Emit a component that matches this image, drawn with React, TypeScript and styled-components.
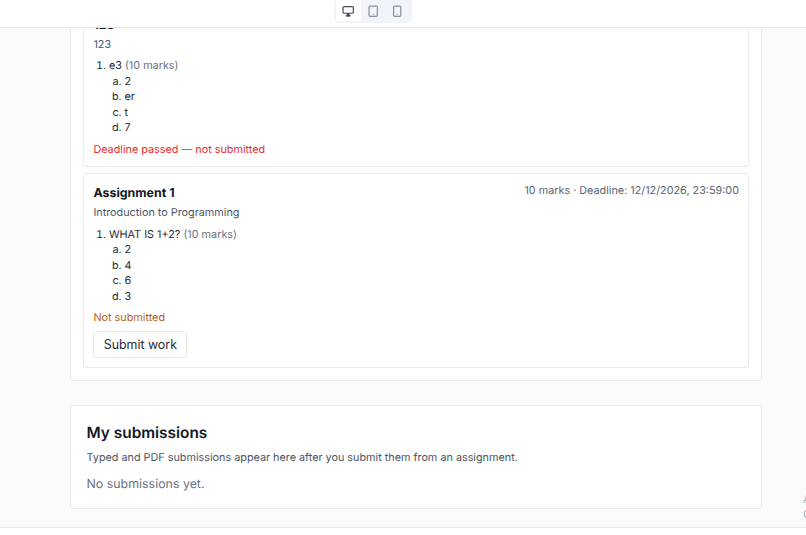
import React, {useState} from "react";
import styled, {createGlobalStyle} from "styled-components";
import {Smartphone, Tablet} from "lucide-react";

const assignments = [
    {
        id: 1,
        title: "123",
        course: "123",
        meta: "10 marks · Deadline: 12/12/2025, 23:59:00",
        question: "e3",
        options: ["2", "er", "t", "7"],
        open: false,
    },
    {
        id: 2,
        title: "Assignment 1",
        course: "Introduction to Programming",
        meta: "10 marks · Deadline: 12/12/2026, 23:59:00",
        question: "WHAT IS 1+2?",
        options: ["2", "4", "6", "3"],
        open: true,
    },
]

type IconProps = { size: number; strokeWidth: number }

// monitor with a solid stand
const Desktop = ({size, strokeWidth}: IconProps) => (
    <svg width={size} height={size} viewBox="0 0 24 24" fill="none" stroke="currentColor"
         strokeWidth={strokeWidth} strokeLinecap="round" strokeLinejoin="round">
        <rect x="2" y="3" width="20" height="13" rx="2"/>
        <path d="M10.5 17h3l.5 4h-4z" fill="currentColor"/>
        <path d="M8 21h8"/>
    </svg>
)

const devices = [
    {id: "desktop", Icon: Desktop},
    {id: "tablet", Icon: Tablet},
    {id: "mobile", Icon: Smartphone},
]

function App() {

    const [device, setDevice] = useState("desktop")

    return (
        <AppStyled>
            <GlobalStyle/>
            <Toolbar>
                <DeviceSwitch>
                    {devices.map(({id, Icon}) => (
                        <DeviceButton key={id} $active={device === id} aria-label={id}
                                      onClick={() => setDevice(id)}>
                            <Icon size={12.4} strokeWidth={2.3}/>
                        </DeviceButton>
                    ))}
                </DeviceSwitch>
            </Toolbar>
            <Preview>
                <Panel>
                    <AssignmentList>
                        {assignments.map(a => (
                            <AssignmentCard key={a.id}>
                                <CardHeader>
                                    <CardTitle>{a.title}</CardTitle>
                                    <Meta>{a.meta}</Meta>
                                </CardHeader>
                                <Course>{a.course}</Course>
                                <Questions>
                                    <li>
                                        {a.question} <Marks>(10 marks)</Marks>
                                        <Options>
                                            {a.options.map(o => <li key={o}>{o}</li>)}
                                        </Options>
                                    </li>
                                </Questions>
                                <Status $open={a.open}>
                                    {a.open ? "Not submitted" : "Deadline passed — not submitted"}
                                </Status>
                                {a.open && <SubmitButton>Submit work</SubmitButton>}
                            </AssignmentCard>
                        ))}
                    </AssignmentList>
                </Panel>
                <Submissions>
                    <SectionTitle>My submissions</SectionTitle>
                    <Hint>Typed and PDF submissions appear here after you submit them from an assignment.</Hint>
                    <Empty>No submissions yet.</Empty>
                </Submissions>
                <Watermark>
                    <div>Activate Windows</div>
                    <div>Go to Settings to activate Windows.</div>
                </Watermark>
            </Preview>
        </AppStyled>
    );
}

const GlobalStyle = createGlobalStyle`
  * {
    box-sizing: border-box;
  }

  body {
    margin: 0;
    background: #fff;
    font-family: Inter, sans-serif;
    color: #1f2937;
    overflow: hidden;
    text-rendering: geometricPrecision;
  }
`

const AppStyled = styled.div`
  display: flex;
  flex-direction: column;
  height: 535px;
  padding-bottom: 7px;
  overflow: hidden;
`

const Toolbar = styled.div`
  flex: none;
  display: flex;
  justify-content: center;
  align-items: flex-end;
  height: 28px;
  padding-bottom: 4px;
  padding-right: 60px;
  border-bottom: 1px solid #e2e8f0;
`

const DeviceSwitch = styled.div`
  display: flex;
  padding: 1px 2px 2px;
  background: #f1f5f9;
  border-radius: 5px;
`

const DeviceButton = styled.button<{ $active: boolean }>`
  display: flex;
  align-items: center;
  justify-content: center;
  width: 24.5px;
  height: 22px;
  padding: 2px 0 0;
  border: none;
  border-radius: 4px;
  cursor: pointer;
  background: ${p => p.$active ? "#fff" : "transparent"};
  color: ${p => p.$active ? "#3f4a5a" : "#7f90a6"};
`

const Preview = styled.div`
  position: relative;
  flex: 1;
  display: flex;
  flex-direction: column;
  justify-content: flex-end;
  gap: 24px;
  padding: 0 44px 18px 70px;
  min-height: 0;
  overflow: hidden;
  background: #f8fafc;
  border-bottom: 1px solid #e2e8f0;
`

const Panel = styled.section`
  flex: none;
  width: 692px;
  padding: 12px;
  background: #fff;
  border: 1px solid #e8ebef;
  border-radius: 3px;
`

const Submissions = styled(Panel)`
  height: 104px;
  padding: 16.5px 15.5px 0;
`

const AssignmentList = styled.div`
  display: flex;
  flex-direction: column;
  gap: 6px;
`

const AssignmentCard = styled.article`
  padding: 9.1px 9px 8px 9.4px;
  border: 1px solid #e8ebef;
  border-radius: 3px;
  font-size: 10.82px;
  line-height: 15.5px;
`

const CardHeader = styled.div`
  display: flex;
  justify-content: space-between;
  align-items: flex-start;
`

const CardTitle = styled.h3`
  margin: 0;
  font-size: 12.4px;
  font-weight: 650;
  line-height: 20px;
  color: #111827;
`

const Meta = styled.span`
  color: #5b6470;
`

const Course = styled.p`
  margin: 2.3px 0 5.9px;
  color: #4b5563;
`

const Questions = styled.ol`
  margin: 0;
  padding-left: 15.5px;
`

const Options = styled.ol`
  margin: 0;
  padding-left: 15.5px;
  list-style-type: lower-alpha;
`

const Marks = styled.span`
  color: #6b7280;
`

const Status = styled.p<{ $open: boolean }>`
  margin: 5.8px 0 0.6px;
  color: ${p => p.$open ? "#b45f14" : "#e02f2f"};
`

const SubmitButton = styled.button`
  display: block;
  height: 27px;
  margin: 5.6px 0 1px;
  padding: 0 9.3px;
  border: 1px solid #e5e7eb;
  border-radius: 3px;
  background: #fff;
  color: #1f2937;
  font: 12.4px Inter, sans-serif;
  cursor: pointer;
`

const SectionTitle = styled.h2`
  margin: 0;
  font-size: 15.4px;
  font-weight: 600;
  line-height: 20px;
  color: #111827;
`

const Hint = styled.p`
  margin: 7px 0 0;
  font-size: 10.82px;
  line-height: 16px;
  color: #4b5563;
`

const Empty = styled.p`
  margin: 8.5px 0 0;
  font-size: 12.4px;
  line-height: 20px;
  color: #6b7280;
`

const Watermark = styled.div`
  position: absolute;
  left: 803px;
  bottom: 5px;
  font-size: 11px;
  line-height: 15px;
  white-space: nowrap;
  color: #a9adb2;
`

export default App;
